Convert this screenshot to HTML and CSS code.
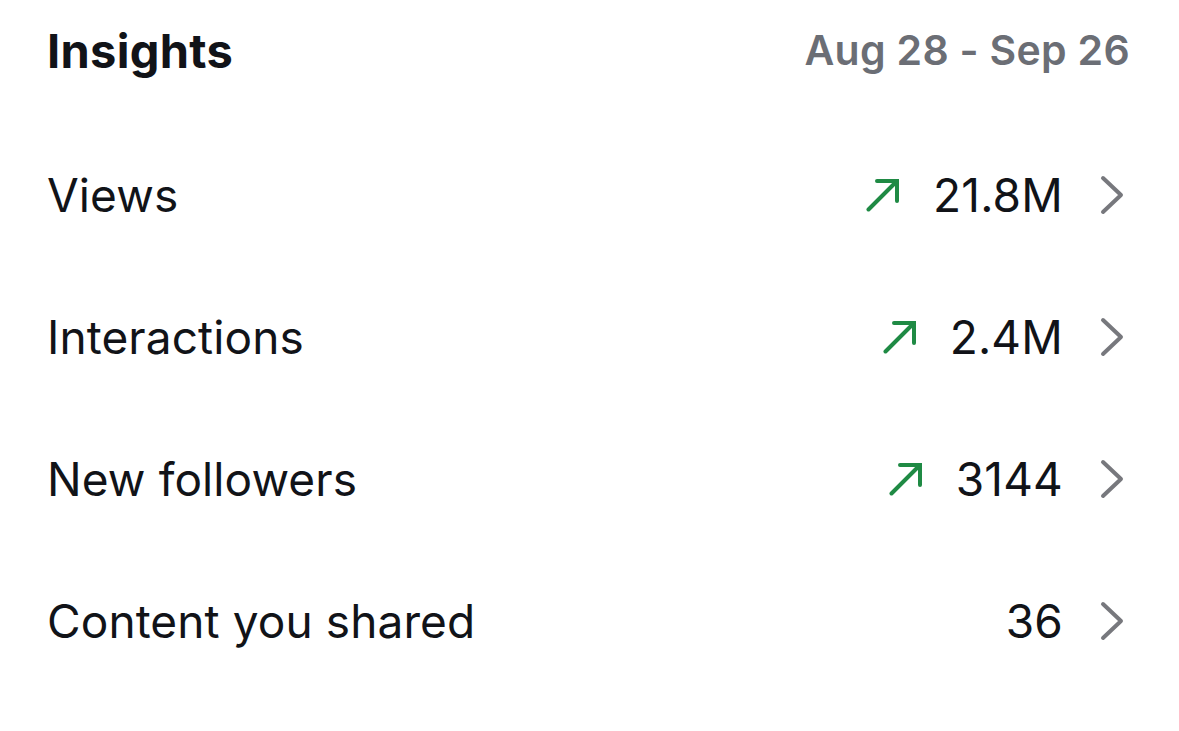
FILE: index.html
```html
<!DOCTYPE html>
<html>
<head>
<meta charset="utf-8">
<link rel="stylesheet" href="styles.css">
</head>
<body>
<div class="panel">
  <div class="header">
    <h1 class="title">Insights</h1>
    <span class="range">Aug 28 - Sep 26</span>
  </div>
  <div class="list">
    <div class="row">
      <span class="label">Views</span>
      <span class="right">
        <svg class="trend" width="34" height="34" viewBox="0 0 34 34"><path d="M2.5 31.5 L31 3 M11 3 H31 V23" fill="none" stroke="#1f8a44" stroke-width="4" stroke-linecap="round" stroke-linejoin="miter"/></svg>
        <span class="value">21.8M</span>
        <svg class="chev" width="24" height="40" viewBox="0 0 24 40"><polyline points="3,3 21,20 3,37" fill="none" stroke="#77787d" stroke-width="4" stroke-linecap="round" stroke-linejoin="round"/></svg>
      </span>
    </div>
    <div class="row">
      <span class="label">Interactions</span>
      <span class="right">
        <svg class="trend" width="34" height="34" viewBox="0 0 34 34"><path d="M2.5 31.5 L31 3 M11 3 H31 V23" fill="none" stroke="#1f8a44" stroke-width="4" stroke-linecap="round" stroke-linejoin="miter"/></svg>
        <span class="value">2.4M</span>
        <svg class="chev" width="24" height="40" viewBox="0 0 24 40"><polyline points="3,3 21,20 3,37" fill="none" stroke="#77787d" stroke-width="4" stroke-linecap="round" stroke-linejoin="round"/></svg>
      </span>
    </div>
    <div class="row">
      <span class="label">New followers</span>
      <span class="right">
        <svg class="trend" width="34" height="34" viewBox="0 0 34 34"><path d="M2.5 31.5 L31 3 M11 3 H31 V23" fill="none" stroke="#1f8a44" stroke-width="4" stroke-linecap="round" stroke-linejoin="miter"/></svg>
        <span class="value">3144</span>
        <svg class="chev" width="24" height="40" viewBox="0 0 24 40"><polyline points="3,3 21,20 3,37" fill="none" stroke="#77787d" stroke-width="4" stroke-linecap="round" stroke-linejoin="round"/></svg>
      </span>
    </div>
    <div class="row">
      <span class="label">Content you shared</span>
      <span class="right">
        <span class="value">36</span>
        <svg class="chev" width="24" height="40" viewBox="0 0 24 40"><polyline points="3,3 21,20 3,37" fill="none" stroke="#77787d" stroke-width="4" stroke-linecap="round" stroke-linejoin="round"/></svg>
      </span>
    </div>
  </div>
</div>
</body>
</html>
```
FILE: styles.css
```css
html, body {
  margin: 0;
  padding: 0;
  background: #ffffff;
}
body {
  font-family: Inter, "Noto Sans", "Liberation Sans", sans-serif;
  color: #111318;
}
.panel {
  padding: 0 50px 0 47px;
  width: 1082px;
}
.header {
  height: 100px;
  display: flex;
  align-items: center;
  justify-content: space-between;
}
.title {
  margin: 0;
  font-size: 47px;
  font-weight: 700;
  letter-spacing: 0.3px;
}
.range {
  font-size: 41px;
  font-weight: 600;
  color: #6b6e75;
  letter-spacing: 0.3px;
  margin-right: -1px;
}
.list {
  margin-top: 24px;
}
.row {
  height: 142px;
  display: flex;
  align-items: center;
  justify-content: space-between;
}
.label {
  font-size: 46px;
  font-weight: 400;
  letter-spacing: 0.1px;
}
.right {
  display: flex;
  align-items: center;
}
.trend {
  margin-right: 33px;
}
.value {
  font-size: 46px;
  font-weight: 400;
  letter-spacing: 0.2px;
}
.chev {
  margin-left: 37px;
  margin-right: 5px;
}
```
